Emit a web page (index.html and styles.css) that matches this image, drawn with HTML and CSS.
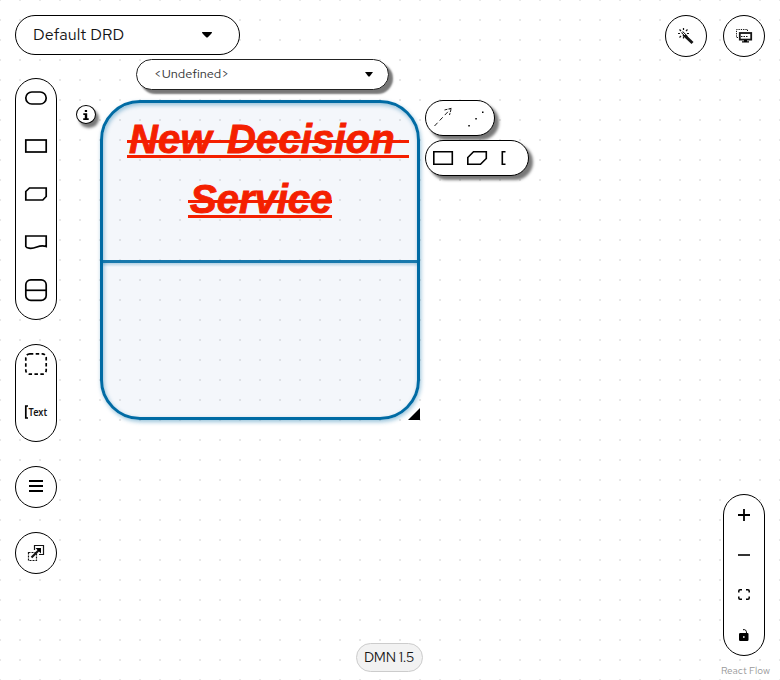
FILE: index.html
```html
<!DOCTYPE html>
<html lang="en">
<head>
<meta charset="utf-8">
<title>DMN Editor</title>
<link rel="stylesheet" href="styles.css">
</head>
<body>
<main class="canvas">
  <section class="node">
    <h1 class="node-title"><span class="line l1">New Decision </span><span class="line l2">Service</span></h1>
    <svg class="resize" width="12" height="12"><path d="M12 0V12H0Z"/></svg>
  </section>

  <button class="info"><svg width="8" height="10" viewBox="0 0 8 10"><path d="M2.8 0h2.3v2H2.8zM1.3 3.3h3.9v4.9h1.5V10H1.2V8.2h1.6V5H1.3z"/></svg></button>
  <div class="type-select"><span>&lt;Undefined&gt;</span><svg width="8" height="5"><path d="M0 0H8L4.6 4.6H3.4Z"/></svg></div>

  <div class="handles">
    <div class="pill edges">
      <svg width="70" height="36" viewBox="0 0 70 36" fill="none" stroke="#000">
        <path d="M9.5 26L26 8.5" stroke-width=".9" stroke-dasharray="4.5 3"/><path d="M19.5 10L26.3 8.3L24.5 15" stroke-width=".9" stroke-dasharray="3 1"/>
        <path d="M43.3 25.7h1.5M50.3 18.7h1.5M57 12.2h1.5" stroke-width="1.4"/>
      </svg>
    </div>
    <div class="pill nodes">
      <svg width="104" height="36" viewBox="0 0 104 36" fill="none" stroke="#000" stroke-width="1.6">
        <path d="M8.8 11.8H27.3V24.2H8.8ZM48.5 11.8H61.3V18.5L55.5 24.2H42.8V17.5ZM80.5 11.8H77.3V24.2H80.5"/>
      </svg>
    </div>
  </div>

  <div class="left-panel">
    <div class="drd"><span>Default DRD</span><svg width="10" height="6"><path d="M0 0H10Q10 1 9 2L5.8 5.2Q5 5.8 4.2 5.2L1 2Q0 1 0 0Z"/></svg></div>
    <div class="palette">
      <div class="tool"><svg width="24" height="24"><rect x="1.8" y="6" width="20.4" height="12" rx="6"/></svg></div>
      <div class="tool"><svg width="24" height="24"><rect x="1.8" y="6" width="20.4" height="12"/></svg></div>
      <div class="tool"><svg width="24" height="24"><path d="M5.5 6H22.2V14.5L18.8 18H1.8V9.5Z"/></svg></div>
      <div class="tool"><svg width="24" height="24"><path d="M1.8 6H22.2V16.5C15 13.5 12 19.5 5 18.2Q2.5 18 1.8 16.5Z"/></svg></div>
      <div class="tool"><svg width="24" height="24"><rect x="1.8" y="1.8" width="20.4" height="20.6" rx="5"/><path d="M1.8 12.3H22.2"/></svg></div>
    </div>
    <div class="palette">
      <div class="tool"><svg width="24" height="24"><rect x="1.8" y="1.8" width="20.4" height="20.4" rx="4" stroke-dasharray="3.5 2.4"/></svg></div>
      <div class="tool"><svg width="24" height="24"><path d="M4 6H1.8V18H4"/><text x="4.6" y="16" textLength="18.5" lengthAdjust="spacingAndGlyphs">Text</text></svg></div>
    </div>
    <button class="round menu"><svg width="14" height="12"><path d="M0 0h14v2H0zM0 5h14v2H0zM0 10h14v2H0z"/></svg></button>
    <button class="round"><svg width="16" height="16"><g fill="none" stroke="#151515" stroke-width="1.2"><path d="M6.5 5V.5h9v9H11"/><path d="M.5 7.5h8v8h-8z" stroke-dasharray="2 1"/><path d="M3.5 12.5L12 4" stroke-width="2.2"/></g><path d="M7.5 3h5.5v5.5z"/></svg></button>
  </div>

  <div class="right-panel">
    <button class="round"><svg width="16" height="16"><path d="M5.5 6.5L14.5 15" stroke="#151515" stroke-width="3"/><path d="M4 4L9 9" stroke="#151515" stroke-width="2.4"/><path d="M4.3 4.3L7 7" stroke="#fff"/><g fill="none" stroke="#151515" stroke-width="1.2"><path d="M5.5 0V2M5.5 8.5V10.5M0 5.5H2M9 5.5H11M1.5 1.5L3 3M9.5 1.5L8 3M1.5 9.5L3 8"/></g></svg></button>
    <button class="round"><svg width="16" height="14"><g fill="none" stroke="#151515"><path d="M2 8.5H.5V.5H11.5V3" stroke-dasharray="1.3 1"/><rect x="3.8" y="4" width="11.4" height="6.6" stroke-width="1.8"/><path d="M5 7.5H12" stroke-dasharray="1.5 1"/></g><path d="M8 11h3v1.3h2V13.5H6V12.3h2z"/></svg></button>
  </div>

  <div class="version">DMN 1.5</div>

  <div class="zoom-panel">
    <button><svg width="12" height="12"><path d="M5.1 0h1.8v5.1H12v1.8H6.9V12H5.1V6.9H0V5.1h5.1z"/></svg></button>
    <button><svg width="12" height="2"><path d="M0 .2h12v1.6H0z"/></svg></button>
    <button><svg width="12" height="12" fill="none" stroke="#000" stroke-width="1.5"><path d="M.8 3.5V2Q.8.8 2 .8H4M8 .8h2Q11.2.8 11.2 2V3.5M11.2 7.5V9Q11.2 10.2 10 10.2H8M4 10.2H2Q.8 10.2.8 9V7.5"/></svg></button>
    <button><svg width="10" height="12"><path fill-rule="evenodd" d="M1.2 4h7.3q1 0 1 1v5.8Q9.5 12 8.3 12H1.2Q0 12 0 10.8V5.2Q0 4 1.2 4zM4 7.2v1.6h1.6V7.2z"/><path d="M4 .7Q7.5 0 7.5 4" fill="none" stroke="#000"/></svg></button>
  </div>
  <div class="credit">React Flow</div>
</main>
</body>
</html>
```

FILE: styles.css
```css
* { box-sizing: border-box; }
body { margin: 0; font-family: "Red Hat Text", Inter, "Noto Sans", sans-serif; color: #151515; }
svg { display: block; flex: none; overflow: visible; }
button { padding: 0; border: 0; background: none; font: inherit; display: flex; align-items: center; justify-content: center; }
.canvas {
  position: relative; width: 780px; height: 680px; overflow: hidden; background-color: #fff;
  background-image: conic-gradient(from 90deg at 18px 18px, #e8e8e8 25%, transparent 0);
  background-size: 20px 20px; background-position: 1px 1px;
}

.node {
  position: absolute; left: 100px; top: 100px; width: 320px; height: 320px;
  border: 3px solid #006ba4; border-radius: 40px;
  background: linear-gradient(#006ba4e6, #006ba4e6) 0 157px / 100% 3px no-repeat, linear-gradient(#006ba444, #006ba400) 0 160px / 100% 4px no-repeat, #0050a00b;
  box-shadow: 1px 2px 4px #006ba466, inset 1px 2px 4px #006ba466;
}
.node-title {
  margin: 6px 0 0; display: flex; flex-direction: column; align-items: flex-start;
  font: italic bold 40px/60px "Nimbus Sans", "Liberation Sans", sans-serif; color: #f42000;
}
.line {
  height: 60px; white-space: pre; padding-left: 2px; -webkit-text-stroke: .9px #f42000;
  background: linear-gradient(#f42000, #f42000) 0 31px / 100% 3px no-repeat, linear-gradient(#f42000, #f42000) 0 46px / 100% 3px no-repeat;
}
.l1 { width: 282px; margin-left: 24px; letter-spacing: .15px; word-spacing: 4px; }
.l2 { width: 144px; margin-left: 85px; }
.resize { position: absolute; right: -3px; bottom: -3px; }

.info {
  position: absolute; left: 76px; top: 105px; width: 20px; height: 19px;
  border: 1px solid #000; border-radius: 50%; background: #fff; box-shadow: 3px 4px 3px #0008;
}
.type-select {
  position: absolute; left: 136px; top: 59px; width: 253px; height: 31px; padding: 0 16px 2px 17px;
  display: flex; align-items: center; justify-content: space-between;
  border: 1px solid #222; border-radius: 16px; background: #fff; box-shadow: 4px 4px 2px #0008;
  font-size: 11px;
}
.type-select span { transform: scaleX(1.16); transform-origin: left; color: #333; }
.type-select svg { position: relative; left: .5px; top: .5px; }
.handles { position: absolute; left: 425px; top: 100px; display: flex; flex-direction: column; gap: 4px; }
.pill { height: 36px; border: 1px solid #000; border-radius: 18px; background: #fff; box-shadow: 4px 4px 3px #0008; }
.pill svg { margin: -1px; }
.edges { width: 70px; }
.nodes { width: 104px; }

.left-panel { position: absolute; left: 15px; top: 15px; display: flex; flex-direction: column; gap: 24px; }
.drd {
  width: 225px; height: 40px; margin-bottom: -1px; padding: 0 27px 2px 17px;
  display: flex; align-items: center; justify-content: space-between;
  border: 1px solid #000; border-radius: 20px; background: #fff; font-size: 16px; letter-spacing: .1px;
}
.drd svg { margin-top: 2px; }
.palette { width: 42px; border: 1px solid #000; border-radius: 21px; background: #fff; }
.tool { height: 48px; padding-bottom: 10px; display: flex; align-items: center; justify-content: center; }
.tool svg { fill: none; stroke: #000; stroke-width: 1.7; }
.tool text { fill: #151515; stroke: none; font: 600 10px "Noto Sans", sans-serif; }
.round { width: 42px; height: 42px; border: 1px solid #000; border-radius: 50%; background: #fff; }
.menu { padding-bottom: 2px; }
.right-panel { position: absolute; top: 15px; right: 15px; display: flex; gap: 16px; }

.version {
  position: absolute; left: 356px; top: 643px; width: 67px; height: 29px; padding: 0 1px 1px 0;
  display: flex; align-items: center; justify-content: center;
  border: 1px solid #ccc; border-radius: 15px; background: #f2f2f2; font-size: 14px; letter-spacing: -.25px; white-space: nowrap;
}
.zoom-panel {
  position: absolute; right: 15px; bottom: 24px; width: 42px; height: 162px;
  display: flex; flex-direction: column; border: 1px solid #000; border-radius: 21px; background: #fff;
}
.zoom-panel button { height: 40px; }
.credit { position: absolute; right: 10px; bottom: 3px; font-size: 10px; line-height: 13px; color: #999; }
```
